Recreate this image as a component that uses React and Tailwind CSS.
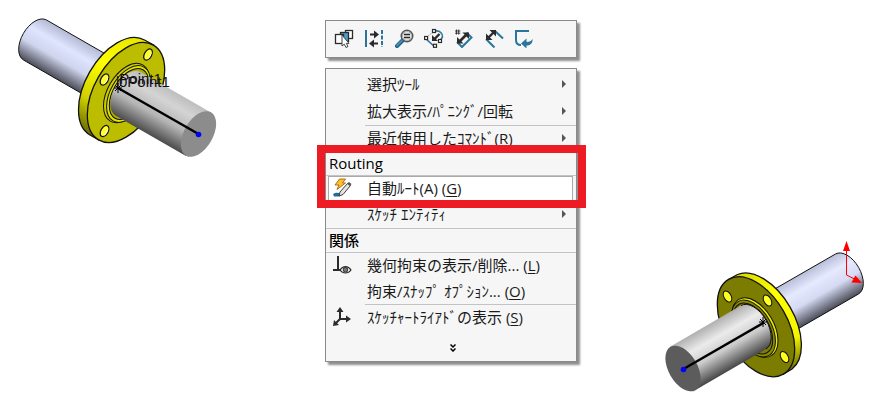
function Icon({ children }) {
  return (
    <svg className="w-5 h-5 shrink-0" viewBox="0 0 20 20" fill="none" aria-hidden="true">
      {children}
    </svg>
  );
}

const BLUE = '#2a759b';
const INK = '#2b2b2b';

const tools = [
  {
    label: '選択',
    icon: (
      <Icon>
        <rect x="11.500" y="2.500" width="7" height="8" fill="#fff" stroke={INK} strokeWidth="1.300" />
        <rect x="6.500" y="4.500" width="8" height="9" fill="#4a9dc8" stroke={INK} strokeWidth="1.300" />
        <rect x="1.500" y="6.500" width="8" height="9" fill="#fff" stroke={INK} strokeWidth="1.300" />
        <path d="M8 7v11l2.300-1.800 1.700 3.300 2-1-1.700-3.100H15z" fill="#fff" stroke="#444" />
      </Icon>
    ),
  },
  {
    label: '整列',
    icon: (
      <Icon>
        <path d="M2 2v17" stroke={BLUE} strokeWidth="2" />
        <path d="M18 2v17" stroke={BLUE} strokeWidth="2" strokeDasharray="4 1.500" />
        <path d="M6 6.500h6M8 15.500h6" stroke={INK} strokeWidth="2" />
        <path d="M10 2.500l5 4-5 4zM10 11.500l-5 4 5 4z" fill={INK} />
      </Icon>
    ),
  },
  {
    label: '拡大',
    icon: (
      <Icon>
        <path d="M9 12l-6 6" stroke="#1e5f82" strokeWidth="4" strokeLinecap="round" />
        <path d="M8.500 12l-5.500 5.500" stroke="#3d91bb" strokeWidth="2" strokeLinecap="round" />
        <circle cx="13" cy="8" r="5.700" fill="#e4e7e8" stroke="#555" strokeWidth="1.600" />
        <circle cx="13" cy="8" r="4.500" stroke="#a9b4ba" />
        <path d="M10 6.500h6M10 9.500h6" stroke={INK} strokeWidth="1.600" />
      </Icon>
    ),
  },
  {
    label: 'スケッチ',
    icon: (
      <Icon>
        <path d="M11 3c5-1 8 3 7.500 6l-2.500 4" stroke={BLUE} strokeWidth="1.600" />
        <path d="M2 11l9 8" stroke={BLUE} strokeWidth="1.600" />
        <path d="M10 4l-5 3-3 3" stroke="#999" strokeDasharray="2 1" />
        <path d="M15.500 6l-5 5" stroke={INK} strokeWidth="2.400" />
        <path d="M8 13V7l6 6z" fill={INK} />
        <g fill="#fff" stroke={INK} strokeWidth="1.200">
          <rect x="8.500" y="1.500" width="3" height="3" />
          <rect x=".600" y="8.500" width="3" height="3" />
          <rect x="14.500" y="11.500" width="3" height="3" />
          <rect x="9.500" y="16.300" width="3" height="3" />
        </g>
      </Icon>
    ),
  },
  {
    label: 'スマート寸法(自動)',
    icon: (
      <Icon>
        <path d="M2.500 1.500v5M4.700 1.500v5M1 3h5.300M1 5.200h5.300" stroke={INK} strokeWidth=".9" />
        <path d="M3 14l5 5 9.500-9.500-5-5" stroke={BLUE} strokeWidth="2" />
        <path d="M5.500 13.500l7-7" stroke={INK} strokeWidth="2.600" />
        <path d="M3 9v6.500H9.500zM8.500 4.500H15V11z" fill={INK} />
      </Icon>
    ),
  },
  {
    label: 'スマート寸法',
    icon: (
      <Icon>
        <path d="M2 11l8.500 8.500M10.500 2.500l8.500 8" stroke={BLUE} strokeWidth="2" />
        <path d="M4 10l6-6" stroke={INK} strokeWidth="2.400" />
        <path d="M2 5.500V12h6.500zM5.500 2H12v6.500z" fill={INK} />
      </Icon>
    ),
  },
  {
    label: '終了',
    icon: (
      <Icon>
        <path d="M15 3H2v9c0 3 2 5 5 5" stroke={BLUE} strokeWidth="2" />
        <path d="M7 15.500l5.500-5v3.500c3 0 5-1 6-3 .5 3.500-2 6.500-6 6.500v3z" fill={BLUE} />
      </Icon>
    ),
  },
];

const autoRouteIcon = (
  <Icon>
    <path d="M7.500 1h6l-3 4h3L5 11.500 7 7H3z" fill="#ffc22e" stroke="#a3620c" strokeWidth=".9" />
    <path d="M1 16c3-2 5-1 8-1l-1.500 3.500H2z" fill="#1e6e98" />
    <path d="M8 14l7.500-8.500 3 2L11 16.500 7 18z" fill="#e4e4e4" stroke="#3d3d3d" />
    <path d="M15 5.500l2-1.500 2.500 2-1.500 2z" fill="#555" />
  </Icon>
);

const relationsIcon = (
  <Icon>
    <path d="M6 1v14M1 15h8" stroke={INK} strokeWidth="2" />
    <path d="M8 15c3-4.500 8-4.500 11 0-3 4-8 4-11 0z" fill="#fff" stroke={INK} strokeWidth="1.200" />
    <circle cx="13.500" cy="14.800" r="2.300" fill="#777" stroke={INK} />
  </Icon>
);

const triadIcon = (
  <Icon>
    <path d="M8 4v8h7M8 12l-4 4" stroke={INK} strokeWidth="2" />
    <path d="M8 0l3.500 5h-7zM19 12l-5 3.500v-7zM1 19l1-6 5 5z" fill={INK} />
  </Icon>
);

function MenuItem({ icon, shortcut, submenu, className = '', children }) {
  return (
    <button type="button" role="menuitem" className={`flex w-full items-center pr-2.5 pb-0.5 text-left whitespace-nowrap ${className}`}>
      <span className="w-[41px] shrink-0 pl-[6px]">{icon}</span>
      <span className="flex-1">
        {children}
        {shortcut && <> (<span className="underline underline-offset-2">{shortcut}</span>)</>}
      </span>
      {submenu && (
        <svg className="w-1 h-2" viewBox="0 0 4 8" aria-hidden="true">
          <path d="M0 0l4 4-4 4z" fill="#555" />
        </svg>
      )}
    </button>
  );
}

function Separator({ inset }) {
  return <div role="separator" className={`h-px bg-[#c3c3c3] ${inset ? 'ml-[39px]' : ''}`} />;
}

function Heading({ children }) {
  return <h2 className="flex h-[23px] items-center pb-0.5 pl-[3px] font-medium text-black">{children}</h2>;
}

function ContextMenu() {
  return (
    <div role="menu" className="border border-[#8a8a8a] bg-[#f6f6f6] pt-0.5 shadow-[3px_3px_2px_#8f8f8f]">
      <MenuItem className="h-[27px]" submenu>選択ﾂｰﾙ</MenuItem>
      <MenuItem className="h-[27px]" submenu>拡大表示/ﾊﾟﾆﾝｸﾞ/回転</MenuItem>
      <Separator inset />
      <MenuItem className="h-[25px]" submenu>最近使用したｺﾏﾝﾄﾞ(R)</MenuItem>
      <Separator />
      <div className="relative">
        <Heading>Routing</Heading>
        <Separator />
        <div className="mr-[3px] ml-[2px] border border-[#aaa] bg-white">
          <MenuItem className="-ml-[3px] h-6" icon={autoRouteIcon} shortcut="G">自動ﾙｰﾄ(A)</MenuItem>
        </div>
        <div className="pointer-events-none absolute -top-[7px] -right-[10px] -bottom-[6px] -left-[9px] border-8 border-[#ed1c24]" />
      </div>
      <MenuItem className="h-[26px]" submenu>ｽｹｯﾁ ｴﾝﾃｨﾃｨ</MenuItem>
      <Separator />
      <Heading>関係</Heading>
      <Separator />
      <MenuItem className="h-[26px]" icon={relationsIcon} shortcut="L">幾何拘束の表示/削除...</MenuItem>
      <MenuItem className="h-[25px]" shortcut="O">拘束/ｽﾅｯﾌﾟ ｵﾌﾟｼｮﾝ...</MenuItem>
      <Separator inset />
      <MenuItem className="h-[25px]" icon={triadIcon} shortcut="S">ｽｹｯﾁｬｰﾄﾗｲｱﾄﾞの表示</MenuItem>
      <button type="button" aria-label="展開" className="flex h-[31px] w-full items-center justify-center pt-1 pl-1">
        <svg className="h-2 w-1.5" viewBox="0 0 6 8" fill="none">
          <path d="M.5.500L3 3 5.500.500M.5 4.500L3 7l2.500-2.500" stroke="#000" strokeWidth="1.500" />
        </svg>
      </button>
    </div>
  );
}

function LeftFlange() {
  return (
    <svg className="w-[230px] h-[170px]" viewBox="0 0 230 170" fill="none" role="img" aria-label="フランジ">
      <defs>
        <linearGradient id="pipeL" gradientUnits="userSpaceOnUse" x1="46" y1="20" x2="23" y2="60">
          <stop offset="0" stopColor="#b5bbd4" />
          <stop offset=".3" stopColor="#dfe4ff" />
          <stop offset=".6" stopColor="#d0d5ee" />
          <stop offset="1" stopColor="#494b55" />
        </linearGradient>
        <linearGradient id="rodL" gradientUnits="userSpaceOnUse" x1="211" y1="112" x2="186" y2="156">
          <stop offset="0" stopColor="#bdbdbd" />
          <stop offset=".25" stopColor="#d4d4d4" />
          <stop offset=".6" stopColor="#b5b5b5" />
          <stop offset="1" stopColor="#4a4a4a" />
        </linearGradient>
        <linearGradient id="rimL" gradientUnits="userSpaceOnUse" x1="140" y1="38" x2="85" y2="135">
          <stop offset="0" stopColor="#e6e600" />
          <stop offset=".35" stopColor="#ffff00" />
          <stop offset=".7" stopColor="#d2d200" />
          <stop offset="1" stopColor="#626200" />
        </linearGradient>
      </defs>
      <path d="M46.500 20A23 13.300 -60 0 0 23.500 60L100 104L123 64Z" fill="url(#pipeL)" stroke="#111" />
      <path d="M144.500 40L153.500 45L99 140L90 135A54.700 31.600 -60 0 1 144.500 40Z" fill="url(#rimL)" stroke="#111" strokeWidth="1.300" />
      <ellipse cx="126" cy="92.500" rx="54.700" ry="31.600" transform="rotate(-60 126 92.500)" fill="#bdbd00" stroke="#111" strokeWidth="1.300" />
      {[[148, 54.5], [104.5, 79.5], [104.5, 131]].map(([x, y]) => (
        <g key={`${x}-${y}`} transform={`translate(${x} ${y}) rotate(-60)`}>
          <ellipse rx="6" ry="3.600" fill="#ffff30" stroke="#111" strokeWidth="1.300" />
          <path d="M-5 1.500A6 3.600 0 0 0 5 1.500Q0 3-5 1.500Z" fill="#fff" />
        </g>
      ))}
      <ellipse cx="126.500" cy="93" rx="32.500" ry="18.800" transform="rotate(-60 126.500 93)" fill="#caca00" stroke="#111" />
      <ellipse cx="128.500" cy="94" rx="31" ry="17.900" transform="rotate(-60 128.500 94)" fill="#e2e200" stroke="#111" />
      <ellipse cx="129" cy="94" rx="28" ry="16" transform="rotate(-60 129 94)" fill="#adad00" stroke="#111" />
      <path d="M140.500 72L211 112.500L186 156L115.500 115.500A25 14.400 -60 0 1 140.500 72Z" fill="url(#rodL)" />
      <ellipse cx="198.500" cy="134" rx="25" ry="14.400" transform="rotate(-60 198.500 134)" fill="#8c8c8c" />
      <g fill="#111" className="text-[15px] [font-family:'Liberation_Sans',Arial,sans-serif]">
        <text x="116" y="84">jPoint1</text>
        <text x="119" y="87">0Point1</text>
      </g>
      <path d="M118 88L198.500 134" stroke="#000" strokeWidth="2.500" />
      <path d="M118 83v10M114 88h8M115 85l6 6M121 85l-6 6" stroke="#000" />
      <circle cx="198.500" cy="134.500" r="2.800" fill="#0000ff" />
    </svg>
  );
}

function RightFlange() {
  return (
    <svg className="w-[229px] h-[179px]" viewBox="650 230 229 179" fill="none" role="img" aria-label="フランジ">
      <defs>
        <linearGradient id="pipeR" gradientUnits="userSpaceOnUse" x1="835.500" y1="254" x2="858.500" y2="294">
          <stop offset="0" stopColor="#b9bed8" />
          <stop offset=".3" stopColor="#e6eaff" />
          <stop offset=".6" stopColor="#d5d9f2" />
          <stop offset="1" stopColor="#4b4d58" />
        </linearGradient>
        <linearGradient id="rodR" gradientUnits="userSpaceOnUse" x1="670.500" y1="346.500" x2="695.500" y2="390">
          <stop offset="0" stopColor="#b0b0b0" />
          <stop offset=".3" stopColor="#ebebeb" />
          <stop offset=".6" stopColor="#cacaca" />
          <stop offset="1" stopColor="#454545" />
        </linearGradient>
        <linearGradient id="rimR" gradientUnits="userSpaceOnUse" x1="740" y1="273" x2="795" y2="370">
          <stop offset="0" stopColor="#d8d800" />
          <stop offset=".3" stopColor="#ffff00" />
          <stop offset=".75" stopColor="#f4f400" />
          <stop offset="1" stopColor="#686800" />
        </linearGradient>
      </defs>
      <path d="M835.500 254A23 13.300 60 0 1 858.500 294L782 338L759 298Z" fill="url(#pipeR)" />
      <path d="M759 298L835.500 254A23 13.300 60 0 1 858.500 294L782 338" stroke="#111" />
      <path d="M728.500 279.500L737.500 274.500A54.700 31.600 60 0 1 792 369L783.500 374Z" fill="url(#rimR)" stroke="#111" strokeWidth="1.300" />
      <ellipse cx="756" cy="326.700" rx="54.700" ry="31.600" transform="rotate(60 756 326.700)" fill="#7c7c00" stroke="#111" strokeWidth="1.300" />
      {[[727.5, 296.5], [767.5, 300.5], [784.5, 357]].map(([x, y]) => (
        <ellipse key={x} cx={x} cy={y} rx="6" ry="3.600" transform={`rotate(60 ${x} ${y})`} fill="#ffff20" stroke="#111" />
      ))}
      <ellipse cx="755" cy="327.500" rx="32.500" ry="18.800" transform="rotate(60 755 327.500)" fill="#e8e800" stroke="#111" />
      <ellipse cx="753.500" cy="328.500" rx="31" ry="17.900" transform="rotate(60 753.500 328.500)" fill="#8b8b00" stroke="#111" />
      <ellipse cx="753" cy="328.500" rx="28" ry="16" transform="rotate(60 753 328.500)" fill="#7c7c00" stroke="#111" />
      <path d="M670.500 346.500L741 305.500A25 14.400 60 0 1 766 349L695.500 390Z" fill="url(#rodR)" />
      <path d="M741 305.500A25 14.400 60 0 1 766 349" stroke="#111" />
      <ellipse cx="683" cy="368.500" rx="25" ry="14.400" transform="rotate(60 683 368.500)" fill="#5c5c5c" />
      <path d="M683.500 369L764 322.500" stroke="#000" strokeWidth="2.500" />
      <path d="M763 317v10M759 322h8M760 319l6 6M766 319l-6 6" stroke="#000" />
      <circle cx="683.500" cy="369.500" r="2.800" fill="#0000ff" />
      <path d="M846.500 250v25l10 5" stroke="#f00" />
      <path d="M846.500 241l3.500 10h-7zM862 283l-10.500-.500 4-7z" fill="#f00" />
    </svg>
  );
}

export default function App() {
  return (
    <main className="grid min-h-screen grid-cols-[325fr_252px_302fr] bg-white text-[15px] leading-5 text-[#1a1a1a] [font-family:'Open_Sans','Noto_Sans_CJK_JP',sans-serif]">
      <div className="self-start">
        <LeftFlange />
      </div>
      <div className="flex flex-col gap-[10px] pt-5 pb-6">
        <div role="toolbar" className="flex border border-[#8a8a8a] bg-[#f6f6f6] px-[3px] shadow-[3px_3px_2px_#8f8f8f]">
          {tools.map((tool) => (
            <button key={tool.label} type="button" aria-label={tool.label} className="flex h-9 w-[30px] items-center justify-center pb-0.5">
              {tool.icon}
            </button>
          ))}
        </div>
        <ContextMenu />
      </div>
      <div className="self-end justify-self-end">
        <RightFlange />
      </div>
    </main>
  );
}
